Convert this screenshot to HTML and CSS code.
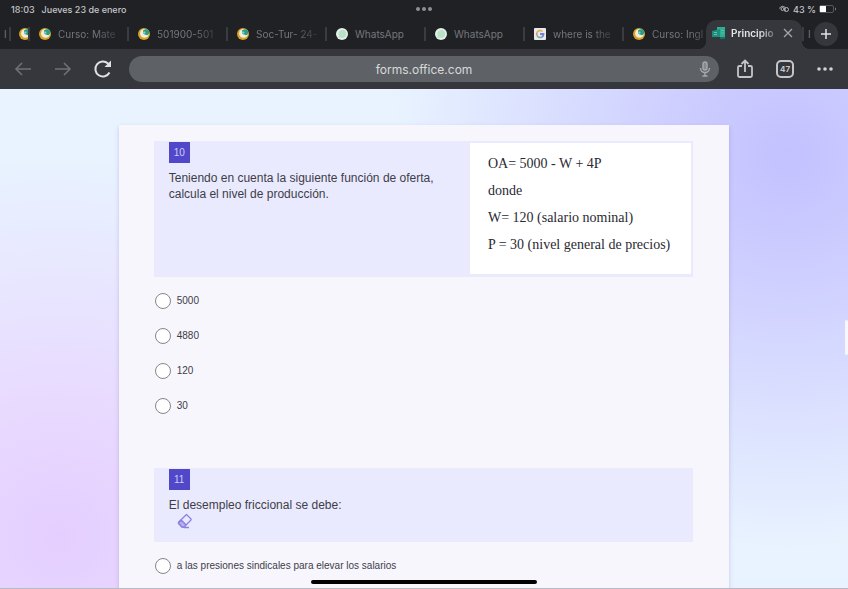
FILE: index.html
```html
<!DOCTYPE html>
<html lang="es">

<head>
    <meta charset="UTF-8">
    <meta name="viewport" content="width=device-width, initial-scale=1.0">
    <title>Principios</title>
    <link rel="stylesheet" href="styles.css">
</head>

<body>
    <!-- shared favicons -->
    <svg class="defs" aria-hidden="true">
        <symbol id="moodle" viewBox="0 0 12 12">
            <circle cx="6" cy="6" r="6" fill="#d9a126" />
            <circle cx="6.500" cy="5.400" r="4.400" fill="#f1efdc" />
            <path d="M5 2.500c2-2 5-1.500 6 .5.8 2-.5 4-2 4.200L5.500 6z" fill="#2a9c88" />
            <circle cx="6.400" cy="4.600" r="1.100" fill="#8fd0c4" />
        </symbol>
        <symbol id="whats" viewBox="0 0 12 12">
            <circle cx="6" cy="6" r="6" fill="#e6efe9" />
            <path d="M2.200 10l.6-2.300A4 4 0 1 1 4.500 9.400z" fill="#b9e2c6" />
        </symbol>
        <symbol id="google" viewBox="0 0 12 12">
            <rect width="12" height="12" rx="1" fill="#e8e8ee" />
            <path d="M8.500 3.500A3.500 3.500 0 0 0 3 4.500" fill="none" stroke="#dcb64a" stroke-width="1.600" />
            <path d="M3 4.500a3.500 3.500 0 0 0 0 3" fill="none" stroke="#d98a80" stroke-width="1.600" />
            <path d="M3 7.500a3.500 3.500 0 0 0 5 1.500" fill="none" stroke="#6fb988" stroke-width="1.600" />
            <path d="M6 6h3.500a3.500 3.500 0 0 1-1.500 3" fill="none" stroke="#7b7fe0" stroke-width="1.800" />
        </symbol>
    </svg>

    <div class="app">
        <header class="browser">
            <div class="status">
                <div class="status-left"><span>18:03</span><span>Jueves 23 de enero</span></div>
                <div class="status-dots"><i></i><i></i><i></i></div>
                <div class="status-right">
                    <svg width="11" height="8" viewBox="0 0 11 8" fill="none" stroke="#b4b6b9">
                        <circle cx="3.500" cy="4" r="1.500" />
                        <circle cx="7.500" cy="4.500" r="2" />
                        <path d="M.6 3.500C1.500 1 4.500.6 6 2.500v4" />
                    </svg>
                    <span>43 %</span>
                    <svg width="18" height="8" viewBox="0 0 18 8">
                        <rect x=".5" y=".5" width="14" height="7" rx="1.500" fill="none" stroke="#55585c" />
                        <rect x="1" y="1" width="6" height="6" fill="#fff" />
                        <path d="M16 2.500c1.500.5 1.500 2.500 0 3z" fill="#77797c" />
                    </svg>
                </div>
            </div>

            <nav class="tabs">
                <div class="stub first">I</div>
                <div class="stub second"><svg width="9" height="12" viewBox="0 0 9 12"><use href="#moodle" width="12" height="12" /></svg></div>
                <button class="tab"><svg><use href="#moodle" /></svg><span>Curso: Mate</span></button>
                <button class="tab"><svg><use href="#moodle" /></svg><span>501900-501</span></button>
                <button class="tab"><svg><use href="#moodle" /></svg><span>Soc-Tur- 24-</span></button>
                <button class="tab"><svg><use href="#whats" /></svg><span class="full">WhatsApp</span></button>
                <button class="tab"><svg><use href="#whats" /></svg><span class="full">WhatsApp</span></button>
                <button class="tab"><svg><use href="#google" /></svg><span>where is the</span></button>
                <button class="tab last"><svg><use href="#moodle" /></svg><span>Curso: Ingl</span></button>
                <div class="active">
                    <svg width="14" height="12" viewBox="0 0 14 12">
                        <path d="M5 0h8v10H5z" fill="#2fae96" />
                        <path d="M0 4l8-2v8H0z" fill="#1b8f7c" />
                        <path d="M8 10h5v2H8z" fill="#157062" />
                        <path d="M2 5.500h3M2 7.500h3M9.500 3.500h2M9.500 6h2" stroke="#5fc4b2" />
                    </svg>
                    <span>Principio</span>
                    <button class="close" aria-label="Cerrar">
                        <svg width="10" height="10" viewBox="0 0 10 10" stroke="#a2a5a9" stroke-width="1.300"><path d="M1 1l8 8M9 1l-8 8" /></svg>
                    </button>
                </div>
                <div class="stub more">I</div>
                <button class="add" aria-label="Nueva pestaña">
                    <svg width="12" height="12" viewBox="0 0 12 12" stroke="#e2e3e5" stroke-width="1.500"><path d="M6 1v10M1 6h10" /></svg>
                </button>
            </nav>

            <div class="toolbar">
                <button aria-label="Atrás">
                    <svg width="18" height="16" viewBox="0 0 18 16" fill="none" stroke="#6d7176" stroke-width="1.600"><path d="M17 8H2M8 2L2 8l6 6" /></svg>
                </button>
                <button aria-label="Adelante">
                    <svg width="18" height="16" viewBox="0 0 18 16" fill="none" stroke="#6d7176" stroke-width="1.600"><path d="M1 8h15M10 2l6 6-6 6" /></svg>
                </button>
                <button aria-label="Recargar">
                    <svg width="20" height="20" viewBox="0 0 20 20" fill="none" stroke="#e0e1e3" stroke-width="2"><path d="M16.500 13.500A7.500 7.500 0 1 1 15 4.500l1.500 1.500" /><path d="M18 1.500V8h-6.500z" fill="#e0e1e3" stroke="none" /></svg>
                </button>
                <div class="address">
                    <input type="text" value="forms.office.com" aria-label="Dirección">
                    <svg class="mic" width="12" height="16" viewBox="0 0 12 16" fill="none" stroke="#a7aaad" stroke-width="1.400"><rect x="4" y="1" width="4" height="8" rx="2" fill="#85898c" /><path d="M1.500 7a4.500 4.500 0 0 0 9 0M6 11.500V15M3.500 15h5" /></svg>
                </div>
                <button aria-label="Compartir">
                    <svg width="18" height="20" viewBox="0 0 18 20" fill="none" stroke="#c3c5c8" stroke-width="1.800"><path d="M6 7H3.500A1.500 1.500 0 0 0 2 8.500v8A1.500 1.500 0 0 0 3.500 18h11a1.500 1.500 0 0 0 1.500-1.500v-8A1.500 1.500 0 0 0 14.500 7H12M9 13V2M5.500 5L9 1.500 12.500 5" /></svg>
                </button>
                <button aria-label="Pestañas abiertas"><span class="count">47</span></button>
                <button aria-label="Menú">
                    <svg width="18" height="4" viewBox="0 0 18 4" fill="#d0d2d4"><circle cx="3" cy="2" r="1.800" /><circle cx="9" cy="2" r="1.800" /><circle cx="15" cy="2" r="1.800" /></svg>
                </button>
            </div>
        </header>

        <main class="page">
            <form class="card">
                <fieldset class="question">
                    <div class="head">
                        <div class="text">
                            <span class="num">10</span>
                            <p>Teniendo en cuenta la siguiente función de oferta, calcula el nivel de producción.</p>
                        </div>
                        <div class="formula">
                            <p>OA= 5000 - W + 4P</p>
                            <p>donde</p>
                            <p>W= 120 (salario nominal)</p>
                            <p>P = 30 (nivel general de precios)</p>
                        </div>
                    </div>
                    <div class="options">
                        <label><input type="radio" name="q10">5000</label>
                        <label><input type="radio" name="q10">4880</label>
                        <label><input type="radio" name="q10">120</label>
                        <label><input type="radio" name="q10">30</label>
                    </div>
                </fieldset>

                <fieldset class="question">
                    <div class="head">
                        <div class="text">
                            <span class="num">11</span>
                            <p>El desempleo friccional se debe:</p>
                            <button type="button" class="erase" aria-label="Borrar">
                                <svg width="16" height="16" viewBox="0 0 16 16" fill="none" stroke="#8a83e0" stroke-width="1.300" stroke-linejoin="round"><path d="M9.500 1.500l4.500 4.500a1 1 0 0 1 0 1L7 14H5L1.500 10.500a1 1 0 0 1 0-1.200z" /><path d="M4 7l5 5M7 14.500h5" /><path d="M4 7l5 5-2 2H5l-3.500-4z" fill="#b5b1ee" /></svg>
                            </button>
                        </div>
                    </div>
                    <div class="options">
                        <label><input type="radio" name="q11">a las presiones sindicales para elevar los salarios</label>
                    </div>
                </fieldset>
            </form>
        </main>
    </div>
    <div class="scroll"></div>
    <div class="home"></div>
</body>

</html>
```
FILE: styles.css
```css
* {
    margin: 0;
    padding: 0;
    box-sizing: border-box;
}

body {
    font-family: "Liberation Sans", Arial, sans-serif;
    font-size: 12px;
    color: #3d3d48;
}

button {
    border: none;
    background: none;
    font: inherit;
    color: inherit;
}

svg {
    display: block;
    flex: none;
}

.defs {
    position: absolute;
    width: 0;
    height: 0;
}

.app {
    height: 100vh;
    display: flex;
    flex-direction: column;
    overflow: hidden;
    border-bottom: 1px solid #b9b9c4;
}

/* browser */
.browser {
    flex: none;
    background: #202125;
    font-family: Inter, sans-serif;
}

.status {
    display: grid;
    grid-template-columns: 1fr auto 1fr;
    align-items: center;
    height: 18px;
    padding: 0 11px;
    font-size: 9px;
    font-weight: 500;
    color: #c4c6c8;
}

.status-left {
    display: flex;
    gap: 7px;
}

.status-dots {
    display: flex;
    gap: 2px;
}

.status-dots i {
    width: 4px;
    height: 4px;
    border-radius: 50%;
    background: #8d8f92;
}

.status-right {
    display: flex;
    justify-content: flex-end;
    align-items: center;
    gap: 3px;
}

.tabs {
    display: flex;
    align-items: center;
    height: 31px;
    padding-right: 10px;
    font-size: 10px;
    color: #74777c;
}

.stub {
    flex: none;
    height: 14px;
    line-height: 14px;
    border-right: 2px solid #3a3c40;
}

.first {
    width: 11px;
    padding-left: 4px;
}

.second {
    width: 19px;
    padding: 1px 0 0 8px;
}

.tab {
    flex: 1 1 0;
    min-width: 0;
    display: flex;
    align-items: center;
    gap: 7px;
    height: 14px;
    padding: 0 6px 0 9px;
    border-right: 2px solid #3a3c40;
}

.tab.last {
    border-right-color: transparent;
}

.tab svg {
    width: 12px;
    height: 12px;
}

.tab span,
.active span {
    flex: 1;
    overflow: hidden;
    white-space: nowrap;
    text-align: left;
    -webkit-mask-image: linear-gradient(to right, #000 60%, rgba(0, 0, 0, .15));
    mask-image: linear-gradient(to right, #000 60%, rgba(0, 0, 0, .15));
}

.tab .full {
    -webkit-mask-image: none;
    mask-image: none;
}

.active {
    position: relative;
    flex: none;
    align-self: flex-end;
    width: 96px;
    height: 29px;
    margin-left: -17px;
    padding: 0 9px 4px 6px;
    display: flex;
    align-items: center;
    gap: 5px;
    background: #35373c;
    border-radius: 10px 10px 0 0;
    color: #e4e5e7;
    font-weight: 600;
}

/* curved feet of the active tab */
.active::before,
.active::after {
    content: "";
    position: absolute;
    bottom: 0;
    width: 8px;
    height: 8px;
}

.active::before {
    right: 100%;
    background: radial-gradient(circle at 0 0, #202125 8px, #35373c 8px);
}

.active::after {
    left: 100%;
    background: radial-gradient(circle at 100% 0, #202125 8px, #35373c 8px);
}

.more {
    width: 12px;
    padding-left: 4px;
    border-left: 2px solid #3a3c40;
    border-right: none;
}

.add {
    flex: none;
    display: flex;
    align-items: center;
    justify-content: center;
    width: 24px;
    height: 24px;
    border-radius: 50%;
    background: #35373c;
}

.toolbar {
    display: flex;
    align-items: center;
    height: 40px;
    padding: 0 3px;
    background: #35373c;
}

.toolbar button {
    flex: none;
    width: 40px;
    height: 40px;
    display: flex;
    align-items: center;
    justify-content: center;
}

.address {
    position: relative;
    flex: 1;
    margin: 0 6px;
}

.address input {
    display: block;
    width: 100%;
    height: 26px;
    border: none;
    border-radius: 13px;
    background: #5e6266;
    color: #d8d9db;
    font: 12px Inter, sans-serif;
    text-align: center;
}

.mic {
    position: absolute;
    top: 5px;
    right: 8px;
}

.count {
    width: 18px;
    height: 18px;
    line-height: 14px;
    border: 2px solid #c3c5c8;
    border-radius: 5px;
    color: #c3c5c8;
    font-size: 8px;
    font-weight: 700;
}

/* form */
.page {
    flex: 1;
    min-height: 0;
    padding-top: 36px;
    overflow: hidden;
    background:
        radial-gradient(circle at 93% 13%, #c3c1ff 0, rgba(200, 198, 255, .85) 12%, rgba(215, 215, 255, 0) 44%),
        radial-gradient(circle at 7% 90%, #e4ceff 0, rgba(232, 212, 255, .85) 14%, rgba(238, 228, 255, 0) 42%),
        #e8f3ff;
}

.card {
    width: 72%;
    min-height: 100%;
    margin: 0 auto;
    padding: 16px 36px 0 35px;
    background: #f7f6fd;
    box-shadow: 0 2px 4px rgba(80, 70, 150, .25);
}

.question {
    border: none;
    margin-bottom: 45px;
}

.head {
    display: flex;
    background: #eaeaff;
    padding: 0 2px 0 15px;
}

.text {
    flex: 1;
    padding: 1px 15px 13px 0;
    line-height: 16px;
}

.num {
    display: block;
    width: 21px;
    margin-bottom: 7px;
    background: #5148c9;
    color: #cfccf6;
    font-size: 10px;
    line-height: 21px;
    text-align: center;
}

.formula {
    margin: 2px 0 3px;
    padding: 7px 21px 16px 18px;
    background: #fff;
    font-family: "Liberation Serif", "Times New Roman", serif;
    font-size: 14px;
    line-height: 27px;
    white-space: nowrap;
    color: #2a2a32;
}

.erase {
    display: block;
    margin-left: 8px;
}

.options {
    padding-top: 6px;
}

.options label {
    display: flex;
    align-items: center;
    gap: 6px;
    height: 35px;
    padding-left: 1px;
    font-size: 10px;
}

.options input {
    appearance: none;
    width: 16px;
    height: 16px;
    border: 1px solid #85858c;
    border-radius: 50%;
    background: #fff;
}

/* overlays on the page */
.scroll {
    position: fixed;
    top: 320px;
    right: 0;
    width: 3px;
    height: 35px;
    border-radius: 2px;
    background: #f6f7ff;
}

.home {
    position: fixed;
    bottom: 5px;
    left: 50%;
    width: 226px;
    height: 4px;
    margin-left: -113px;
    border-radius: 2px;
    background: #000;
}
```
